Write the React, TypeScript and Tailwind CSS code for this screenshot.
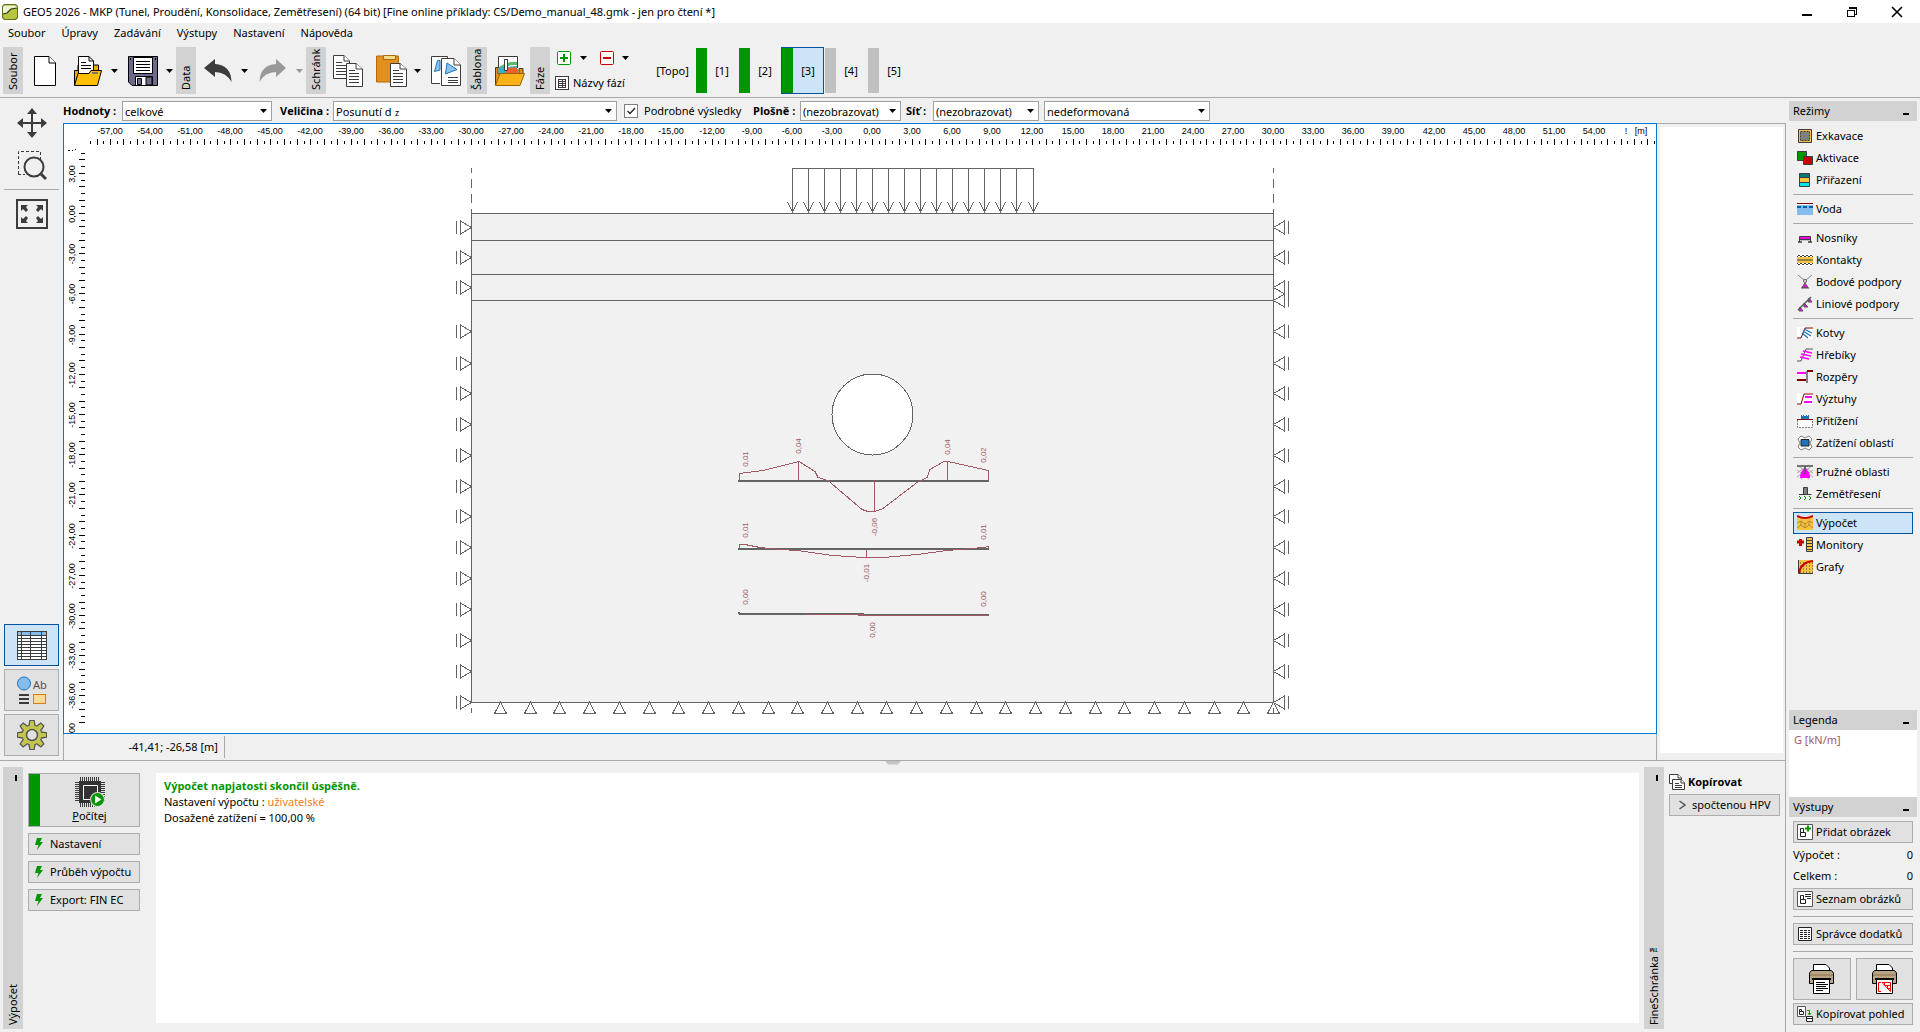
import type { ReactNode } from "react";
import { clsx } from "clsx";

export default function App() {
  return (
    <div className="flex h-screen flex-col overflow-hidden bg-[#f0f0f0] font-['Noto_Sans','Open_Sans',sans-serif] text-[11px] leading-4 text-black">
      <TitleBar />
      <MenuBar />
      <Toolbar />
      <div className="flex min-h-0 flex-1">
        <div className="flex min-w-0 flex-1 flex-col">
          <div className="flex min-h-0 flex-1">
            <ViewTools />
            <Workspace />
            <div className="flex w-[129px] shrink-0 flex-col pt-[25px]">
              <div className="flex flex-1 flex-col border-t border-r border-[#a9a9a9] pt-[3px] pr-[2px] pb-[7px] pl-[3px]">
                <div className="flex-1 bg-white" />
              </div>
            </div>
          </div>
          <BottomPanel />
        </div>
        <Sidebar />
      </div>
    </div>
  );
}

const TitleBar = () => {
  return (
    <header className="flex h-[23px] shrink-0 items-center bg-white pl-[2px]">
      <AppIcon />
      <h1 className="ml-[5px] flex-1 whitespace-nowrap">
        GEO5 2026 - MKP (Tunel, Proudění, Konsolidace, Zemětřesení) (64 bit)
        [Fine online příklady: CS/Demo_manual_48.gmk - jen pro čtení *]
      </h1>
      <button aria-label="Minimalizovat" className="flex w-[45px] justify-center">
        <svg width="12" height="12" stroke="#000" strokeWidth="2">
          <path d="M1 9H11" />
        </svg>
      </button>
      <button aria-label="Obnovit" className="flex w-[45px] justify-center">
        <svg width="12" height="12" fill="none" stroke="#000" shapeRendering="crispEdges">
          <path d="M3.5 3V1.5H10.5V8.5H9" strokeWidth="1" />
          <path d="M1.5 4H8.5V10.5H1.5Z" />
          <path d="M1 4H9M3 2H11" />
        </svg>
      </button>
      <button aria-label="Zavřít" className="flex w-[46px] justify-center">
        <svg width="12" height="12" stroke="#000" strokeWidth="1.6">
          <path d="M1 1L11 11M11 1L1 11" />
        </svg>
      </button>
    </header>
  );
};

const AppIcon = () => (
  <svg width="16" height="16" viewBox="0 0 16 16">
    <rect x="0.5" y="0.5" width="15" height="15" rx="3" fill="#9aae2c" stroke="#5f7020" />
    <path d="M1 1.500H15V4L9 5L5 9L1 10Z" fill="#eef2cc" />
    <path d="M1 10L5 9L9 5L15 4V13Q15 15 13 15H3Q1 15 1 13Z" fill="#b9c53e" />
    <path d="M1 10L5 9L9 5L15 4" fill="none" stroke="#2f3a10" strokeWidth="1.2" />
    <rect x="0.5" y="0.5" width="15" height="15" rx="3" fill="none" stroke="#5f7020" />
  </svg>
);

const MenuBar = () => {
  return (
    <nav className="flex h-5 shrink-0 items-center gap-4 pl-2">
      {["Soubor", "Úpravy", "Zadávání", "Výstupy", "Nastavení", "Nápověda"].map(
        (item) => (
          <button key={item}>{item}</button>
        )
      )}
    </nav>
  );
};

const Caret = ({ muted }: { muted?: boolean }) => (
  <svg width="7" height="4" className="shrink-0">
    <path d="M0 0H7L3.5 4Z" fill={muted ? "#999" : "#000"} />
  </svg>
);

const GroupTab = ({ children }: { children: string }) => (
  <div className="flex h-[47px] w-5 shrink-0 items-center justify-center bg-[#d2d2d2]">
    <span className="h-[47px] rotate-180 pt-1 leading-5 whitespace-nowrap [writing-mode:vertical-rl]">
      {children}
    </span>
  </div>
);

const ToolButton = ({
  label,
  className,
  children,
}: {
  label: string;
  className?: string;
  children: ReactNode;
}) => (
  <button
    aria-label={label}
    className={clsx("flex h-[47px] shrink-0 items-center justify-start", className)}
  >
    {children}
  </button>
);

const Toolbar = () => {
  return (
    <div className="flex h-[55px] shrink-0 border-b border-[#a9a9a9] pt-1 pl-[3px]">
      <GroupTab>Soubor</GroupTab>
      <ToolButton label="Nový" className="w-[40px] pl-[11px]">
        <svg width="22" height="30" fill="#fff" stroke="#000">
          <path d="M0.5 0.5H15L21.5 7V29.5H0.5Z" />
          <path d="M15 0.5V7H21.5" />
        </svg>
      </ToolButton>
      <ToolButton label="Otevřít" className="w-[65px] gap-[9px] pl-[11px]">
        <OpenIcon />
        <Caret />
      </ToolButton>
      <ToolButton label="Uložit" className="w-[48px] gap-2">
        <SaveIcon />
        <Caret />
      </ToolButton>
      <GroupTab>Data</GroupTab>
      <ToolButton label="Zpět" className="w-[63px] gap-[9px] pl-2">
        <svg width="28" height="23">
          <path d="M0 9L11 0V5Q27 6 27.500 23Q22 13 11 13V18Z" fill="#3c3c3c" />
        </svg>
        <Caret />
      </ToolButton>
      <ToolButton label="Znovu" className="w-[47px] gap-[10px]">
        <svg width="27" height="23">
          <path d="M27 9L17 0V5Q1 6 0.500 23Q6 13 17 13V18Z" fill="#999" />
        </svg>
        <Caret muted />
      </ToolButton>
      <GroupTab>Schránk</GroupTab>
      <ToolButton label="Kopírovat" className="w-[50px] pl-[7px]">
        <svg width="30" height="32" fill="#fff" stroke="#3c3c3c">
          <path d="M0.500 0.500H11L16.500 6V23.500H0.500Z" />
          <path d="M11 0.500V6H16.500M3 7.500H9M3 10.500H13M3 13.500H13M3 16.500H13M3 19.500H13" />
          <path d="M13.500 8.500H23L29.500 14V31.500H13.500Z" />
          <path d="M23 8.500V14H29.500M16 15.500H22M16 18.500H26M16 21.500H26M16 24.500H26M16 27.500H26" />
        </svg>
      </ToolButton>
      <ToolButton label="Vložit" className="w-[55px] gap-[7px]">
        <svg width="31" height="32" fill="#fff">
          <path d="M0.500 1H22.500V27H0.500Z" fill="#e3901f" stroke="#b06a10" />
          <path d="M7.500 0.500H19.500V4.500H7.500Z" fill="#f7d98a" stroke="#b06a10" />
          <g stroke="#3c3c3c">
            <path d="M14.500 8.500H24L30.500 14V31.500H14.500Z" />
            <path d="M24 8.500V14H30.500M17 15.500H23M17 18.500H27M17 21.500H27M17 24.500H27M17 27.500H27" />
          </g>
        </svg>
        <Caret />
      </ToolButton>
      <ToolButton label="Kopírovat obrázek" className="w-[36px]">
        <svg width="30" height="30" fill="#fff" stroke="#3c3c3c">
          <path d="M9 27.500H0.500V0.500H16.500V3" />
          <path d="M3.500 15.500L6.500 4.500H9V14Z" fill="#8cc4f0" stroke="#1d74bd" />
          <path d="M10.500 2.500H23L29.500 9V29.500H10.500Z" />
          <path d="M23 2.500V9H29.500" />
          <path d="M16 7L26 13.500L14.500 18Z" fill="#8cc4f0" stroke="#1d74bd" />
          <path d="M17 21.500H27M17 24.500H27M17 26.500H27" />
        </svg>
      </ToolButton>
      <GroupTab>Šablona</GroupTab>
      <ToolButton label="Šablona" className="w-[43px] pl-2">
        <svg width="30" height="30">
          <path d="M3.500 12V0.500H22.500V12" fill="#fff" stroke="#3c3c3c" />
          <path d="M4 11Q12 5 22 6V9Q12 8 4 15Z" fill="#59b96a" />
          <path d="M4 15Q12 10 22 10V14L4 20Z" fill="#29b5c9" />
          <path d="M8 20Q14 13 23 13V20Z" fill="#e8632b" />
          <path d="M9.500 3.500H12.500V14.500H9.500Z" fill="#fff" stroke="#3c3c3c" />
          <path d="M0.500 29V11.500H3V18H24V12.500H28V18" fill="#e3901f" stroke="#3c3c3c" />
          <path d="M4 11.500H22V17.500H4Z" fill="#e8632b" />
          <path d="M4 12L14 9L10 17.500H4Z" fill="#29b5c9" />
          <path d="M9.500 3.500H12.500V14.500H9.500Z" fill="#fff" stroke="#3c3c3c" />
          <path d="M0.500 29.500L5 17.500H29.500L25 29.500Z" fill="#fdb116" stroke="#9a6200" />
        </svg>
      </ToolButton>
      <GroupTab>Fáze</GroupTab>
      <div className="flex w-[100px] shrink-0 flex-col pt-1 pl-[5px]">
        <div className="flex h-[14px] items-center pl-[2px]">
          <button aria-label="Přidat fázi" className="flex items-center gap-[9px]">
            <svg width="14" height="14" fill="#fff" stroke="#009600">
              <rect x="0.500" y="0.500" width="13" height="13" rx="1" />
              <path d="M3 7H11M7 3V11" strokeWidth="2" />
            </svg>
            <Caret />
          </button>
          <button aria-label="Odebrat fázi" className="ml-[13px] flex items-center gap-2">
            <svg width="14" height="14" fill="#fff" stroke="#c80000">
              <rect x="0.500" y="0.500" width="13" height="13" rx="1" />
              <path d="M3 7H11" strokeWidth="2" />
            </svg>
            <Caret />
          </button>
        </div>
        <button className="mt-[10px] flex h-4 items-center gap-1 whitespace-nowrap">
          <svg width="14" height="14" fill="#fff" stroke="#3c3c3c" shapeRendering="crispEdges">
            <path d="M0.500 0.500H13.500V13.500H0.500Z" />
            <path d="M3 3.500H11M3 5.500H11M3 7.500H11M3 9.500H11M3 11.500H11M3.500 3V12M7.500 3V12M10.500 3V12" />
          </svg>
          Názvy fází
        </button>
      </div>
      <StageTabs />
    </div>
  );
};

const OpenIcon = () => (
  <svg width="28" height="30" stroke="#000">
    <path d="M0.500 29V14.500H4V9H24.500V16" fill="#f2a900" />
    <path d="M4.500 20V0.500H15L19.500 5V20Z" fill="#fff" />
    <path d="M15 0.500V5H19.500M7 6.500H12M7 9.500H17M7 12.500H17" fill="none" />
    <path d="M0.500 29.500L4 17.500H15L17 14.500H27.500L23.500 29.500Z" fill="#ffbf00" />
    <path d="M18 17H24" stroke="#777" strokeWidth="2" />
  </svg>
);

const SaveIcon = () => (
  <svg width="30" height="30" stroke="#000">
    <path d="M0.500 0.500H29.500V29.500H4L0.500 26Z" fill="#6d6a8c" />
    <path d="M5.500 1.500H24.500V17.500H5.500Z" fill="#fff" />
    <path d="M8 5.500H22M8 8.500H22M8 11.500H22M8 14.500H22" />
    <path d="M7.500 20.500H24.500V29.500H7.500Z" fill="#fff" />
    <path d="M9.500 22.500H13.500V28.500H9.500ZM18 21H24V29H18Z" fill="#6d6a8c" />
    <path d="M2 3H3M27 3H28" strokeWidth="2" />
  </svg>
);

const stages = [
  { name: "[1]", computed: true },
  { name: "[2]", computed: true },
  { name: "[3]", computed: true, selected: true },
  { name: "[4]", computed: false },
  { name: "[5]", computed: false },
];

const StageTabs = () => {
  return (
    <div className="flex h-[47px]">
      <button className="w-[45px] text-center">[Topo]</button>
      {stages.map(({ name, computed, selected }) => (
        <button
          key={name}
          className={clsx(
            "flex w-[43px] items-stretch border",
            selected ? "border-[#0054a0] bg-[#cce4f7]" : "border-transparent"
          )}
        >
          <span className={clsx("w-[11px]", computed ? "bg-[#009600]" : "bg-[#c0c0c0]")} />
          <span className="flex flex-1 items-center justify-center">{name}</span>
        </button>
      ))}
    </div>
  );
};

const ViewTools = () => {
  return (
    <div className="flex w-[63px] shrink-0 flex-col items-center pt-[9px] pb-1">
      <button aria-label="Posun">
        <svg width="30" height="32" fill="#3c3c3c">
          <path d="M15 1L20 7H16V15H24V11L30 16L24 21V17H16V25H20L15 31L10 25H14V17H6V21L0 16L6 11V15H14V7H10Z" />
        </svg>
      </button>
      <button aria-label="Zoom" className="mt-3">
        <svg width="30" height="30" fill="none" stroke="#3c3c3c">
          <path d="M1.500 23V0.500H23.500V8" strokeDasharray="3 2" />
          <path d="M1 23.500H8" strokeDasharray="3 2" />
          <circle cx="17" cy="16" r="9.500" strokeWidth="2" />
          <path d="M23 22L29 28" strokeWidth="3" />
        </svg>
      </button>
      <hr className="mx-1 mt-2 w-[55px] border-[#a9a9a9]" />
      <button aria-label="Celý výkres" className="mt-[9px]">
        <svg width="32" height="30" fill="#3c3c3c">
          <path d="M1 1H31V29H1Z" fill="none" stroke="#3c3c3c" strokeWidth="2" />
          <path d="M5 6H12L10 8L12 11L10 13L7 10L5 12ZM27 6H20L22 8L20 11L22 13L25 10L27 12ZM5 24H12L10 22L12 19L10 17L7 20L5 18ZM27 24H20L22 22L20 19L22 17L25 20L27 18Z" />
        </svg>
      </button>
      <div className="flex-1" />
      <div className="flex w-[55px] flex-col gap-[3px]">
        <button
          aria-label="Tabulky"
          className="flex h-[42px] items-center justify-center border border-[#0054a0] bg-[#cce4f7]"
        >
          <svg width="30" height="29" fill="#fff" stroke="#3c3c3c" shapeRendering="crispEdges">
            <path d="M0.500 0.500H29.500V28.500H0.500Z" />
            <path d="M1 1H29V4H1Z" fill="#84bdec" stroke="none" />
            <path d="M0 4.500H30M0 7.500H30M0 10.500H30M0 13.500H30M0 16.500H30M0 19.500H30M0 22.500H30M0 25.500H30M4.500 0V29M13.500 0V29M24.500 0V29" />
          </svg>
        </button>
        <button
          aria-label="Popisy"
          className="flex h-[42px] items-center justify-center border border-[#adadad] bg-[#e1e1e1]"
        >
          <svg width="30" height="28">
            <circle cx="7" cy="7.500" r="6.500" fill="#84bdec" stroke="#1d74bd" />
            <path d="M2 19H12M2 23H12M2 27H12" stroke="#3c3c3c" strokeWidth="2" />
            <rect x="16.500" y="18.500" width="12" height="9" fill="#fbdb93" stroke="#e07b1a" />
            <text x="16" y="13" fontSize="11" fill="#505050">
              Ab
            </text>
          </svg>
        </button>
        <button
          aria-label="Nastavení"
          className="flex h-[42px] items-center justify-center border border-[#adadad] bg-[#e1e1e1]"
        >
          <GearIcon />
        </button>
      </div>
    </div>
  );
};

const GearIcon = () => {
  const teeth = [0, 45, 90, 135, 180, 225, 270, 315];
  return (
    <svg width="30" height="30" fill="#c5c64f" stroke="#555">
      {teeth.map((a) => (
        <path
          key={a}
          d="M12 6L13 0.500H17L18 6Z"
          transform={`rotate(${a} 15 15)`}
          strokeWidth="1.500"
        />
      ))}
      <circle cx="15" cy="15" r="10" />
      {teeth.map((a) => (
        <path
          key={a}
          d="M12.500 7L13.500 1H16.500L17.500 7Z"
          transform={`rotate(${a} 15 15)`}
          stroke="none"
        />
      ))}
      <circle cx="15" cy="15" r="5.500" fill="#e1e1e1" strokeWidth="1.500" />
    </svg>
  );
};

const Dropdown = ({
  id,
  label,
  value,
  sub,
  className,
}: {
  id: string;
  label?: string;
  value: string;
  sub?: string;
  className: string;
}) => (
  <div className={clsx("relative h-5 shrink-0", className)}>
    <select
      id={id}
      aria-label={label}
      className="h-5 w-full appearance-none border border-[#a0a0a0] bg-white pl-[2px] text-[11px]"
    >
      <option>{value}</option>
    </select>
    {sub && (
      <span className="pointer-events-none absolute top-[6px] left-[62px] text-[9px] leading-3">
        {sub}
      </span>
    )}
    <span className="pointer-events-none absolute top-2 right-[5px] flex">
      <Caret />
    </span>
  </div>
);

const ResultBar = () => {
  return (
    <div className="flex h-[25px] shrink-0 items-start pt-[3px] leading-5 whitespace-nowrap">
      <label htmlFor="values" className="w-[59px] font-['Open_Sans'] font-bold">
        Hodnoty :
      </label>
      <Dropdown id="values" value="celkové" className="w-[150px]" />
      <label htmlFor="quantity" className="ml-2 w-[53px] font-['Open_Sans'] font-bold">
        Veličina :
      </label>
      <Dropdown id="quantity" value="Posunutí d" sub="z" className="w-[284px]" />
      <label className="ml-[7px] flex h-5 w-[122px] items-center gap-[6px]">
        <span className="relative flex">
          <input
            type="checkbox"
            defaultChecked
            className="peer h-[14px] w-[14px] appearance-none border border-[#808080] bg-white"
          />
          <svg
            width="14"
            height="14"
            className="pointer-events-none absolute inset-0 hidden peer-checked:block"
          >
            <path d="M3.500 7L6 9.500L11 4" fill="none" stroke="#222" strokeWidth="1.300" />
          </svg>
        </span>
        Podrobné výsledky
      </label>
      <label htmlFor="surface" className="w-[54px] pl-[7px] font-['Open_Sans'] font-bold">
        Plošně :
      </label>
      <Dropdown id="surface" value="(nezobrazovat)" className="w-[101px]" />
      <label htmlFor="mesh" className="w-8 pl-[5px] font-['Open_Sans'] font-bold">
        Síť :
      </label>
      <Dropdown id="mesh" value="(nezobrazovat)" className="w-[106px]" />
      <Dropdown id="shape" label="Tvar sítě" value="nedeformovaná" className="ml-[5px] w-[166px]" />
    </div>
  );
};

const Workspace = () => {
  return (
    <div className="flex min-w-0 flex-1 flex-col">
      <ResultBar />
      <div className="min-h-0 flex-1 overflow-hidden border border-[#0078d7] bg-white">
        <Drawing />
      </div>
      <div className="flex h-[26px] shrink-0 items-center border-x border-[#a9a9a9]">
        <div className="flex h-[22px] w-[161px] items-center justify-end border-r border-[#a9a9a9] pr-[6px]">
          -41,41; -26,58 [m]
        </div>
      </div>
    </div>
  );
};

// metres to canvas pixels
const X = (m: number) => Math.round(808 + m * 13.37);
const Y = (m: number) => Math.round(89 - m * 13.4);

const range = (from: number, count: number, step: number) =>
  Array.from({ length: count }, (_, i) => from + i * step);

const fmt = (n: number) => n.toFixed(2).replace(".", ",");

const Rulers = () => {
  return (
    <g fontFamily="'Liberation Sans', sans-serif" fontSize="9" textAnchor="middle">
      {range(-57, 38, 3).map((m) => (
        <text key={m} x={X(m)} y="10">
          {fmt(m)}
        </text>
      ))}
      <text x="1562" y="10">!</text>
      <text x="1577" y="10">[m]</text>
      {[3, ...range(0, 13, -3)].map((m) => (
        <text key={m} transform={`translate(11 ${Y(m) + 1}) rotate(-90)`}>
          {fmt(m)}
        </text>
      ))}
      <text transform="translate(11 604) rotate(-90)">00</text>
      <g stroke="#000" shapeRendering="crispEdges">
        <path d="M4 26.500H6M8 26.500H9M11 25.500H12" />
        {range(-58.5, 235, 0.5).map((m) => (
          <path key={m} d={m % 1 ? `M${X(m)}.5 17V20` : `M${X(m)}.5 15V21`} />
        ))}
        {range(4.5, 86, -0.5).map((m) => (
          <path key={m} d={m % 1 ? `M17 ${Y(m)}.5H21` : `M15 ${Y(m)}.5H21`} />
        ))}
      </g>
    </g>
  );
};

const sideSupports = [103, 133, 163, 207, 239, 269, 300, 331, 362, 392, 423, 454, 485, 516, 547, 578];

const SoilModel = () => {
  return (
    <g fill="none" stroke="#646464" shapeRendering="crispEdges">
      <path d="M407.500 89.500H1209.500V578.500H407.500Z" fill="#f1f1f1" />
      <path d="M407 116.500H1209M407 150.500H1209M407 176.500H1209" />
      <path d="M407.500 44V89M1209.500 44V89" strokeDasharray="9 6" strokeDashoffset="4" />
      <path d="M407.500 584V589M1209.500 584V589" />
      <path d="M728 44.500H970" />
      {[...range(728, 15, 16), 969].map((x) => (
        <path key={x} d={`M${x}.5 44V89M${x - 5}.5 78L${x}.5 88L${x + 5}.5 78`} />
      ))}
      {sideSupports.map((y) => (
        <path key={y} d={`M407.500 ${y}.5L396.500 ${y - 6}V${y + 7}ZM392.500 ${y - 6}V${y + 7}`} />
      ))}
      {[...sideSupports, 176].map((y) => (
        <path key={y} d={`M1209.500 ${y}.5L1220.500 ${y - 6}V${y + 7}ZM1224.500 ${y - 6}V${y + 7}`} />
      ))}
      {range(436, 27, 29.73).map(Math.round).map((x) => (
        <path key={x} d={`M${x}.5 578L${x - 6}.5 589.500H${x + 6}.5Z`} />
      ))}
      <circle cx="808.500" cy="290.500" r="40.500" fill="#fff" />
    </g>
  );
};

const anchorLabels = [
  { x: 681, y: 335, text: "0,01" },
  { x: 734, y: 322, text: "0,04" },
  { x: 883, y: 323, text: "0,04" },
  { x: 919, y: 331, text: "0,02" },
  { x: 810, y: 403, text: "-0,06" },
  { x: 681, y: 406, text: "0,01" },
  { x: 919, y: 408, text: "0,01" },
  { x: 802, y: 449, text: "-0,01" },
  { x: 681, y: 473, text: "0,00" },
  { x: 919, y: 475, text: "0,00" },
  { x: 808, y: 506, text: "0,00" },
];

const Displacements = () => {
  return (
    <>
      <g stroke="#646464" strokeWidth="2" shapeRendering="crispEdges">
        <path d="M674 357H925M674 425H925M674 489H676M675 490H800M794 491H925" />
      </g>
      <g fill="none" stroke="#a05a64" shapeRendering="crispEdges">
        <path d="M675.500 357V349.500L699 346.500L731 338.500L735 337.500L751 347.500L754 353.500L764 356.500L798 385.500L804 387.500H811L819 384.500L853 358.500L863 353.500L866 345.500L880 337.500H884L924.500 346.500V357" />
        <path d="M734.500 338V357M810.500 357V387M883.500 338V357" />
        <path d="M675.500 425V420.500H681L696 423.500L716 425.500L733 426.500L769 431.500L799 433.500H819L853 430.500L883 426.500L919 423.500L924.500 422.500V425" />
        <path d="M802.500 425V433M741 490.500H800M794 491.500H925" />
      </g>
      <g
        fontFamily="'Liberation Sans', sans-serif"
        fontSize="8"
        fill="#a05a64"
        textAnchor="middle"
      >
        {anchorLabels.map(({ x, y, text }) => (
          <text key={`${x}-${y}`} transform={`translate(${x + 3} ${y}) rotate(-90)`}>
            {text}
          </text>
        ))}
      </g>
    </>
  );
};

const Drawing = () => {
  return (
    <svg className="block h-full w-full">
      <Rulers />
      <SoilModel />
      <Displacements />
    </svg>
  );
};

const SideTab = ({ children }: { children: ReactNode }) => (
  <div className="flex w-5 shrink-0 flex-col items-center justify-between bg-[#d2d2d2] pt-2">
    <button aria-label="Sbalit panel" className="ml-[6px] h-[6px] w-[2px] bg-black" />
    <span className="rotate-180 pt-1 leading-5 whitespace-nowrap [writing-mode:vertical-rl]">
      {children}
    </span>
  </div>
);

const BottomPanel = () => {
  return (
    <div className="flex h-[272px] shrink-0 flex-col border-t border-r border-[#a9a9a9] pb-[3px]">
      <div className="flex h-[6px] items-start justify-center">
        <svg width="16" height="4">
          <path d="M0 0H16L13 3.500H3Z" fill="#c4c4c4" />
        </svg>
      </div>
      <div className="flex min-h-0 flex-1 pl-[3px]">
        <SideTab>Výpočet</SideTab>
        <div className="ml-[5px] flex w-[112px] shrink-0 flex-col gap-[6px] pt-[6px]">
          <button className="flex h-[54px] border border-[#adadad] bg-[#e1e1e1]">
            <span className="h-full w-[11px] bg-[#009600]" />
            <span className="flex flex-1 flex-col items-center pt-[3px]">
              <ChipIcon />
              <span className="mt-px">
                <u>P</u>očítej
              </span>
            </span>
          </button>
          {["Nastavení", "Průběh výpočtu", "Export: FIN EC"].map((label) => (
            <button
              key={label}
              className="flex h-[22px] items-center gap-[7px] border border-[#adadad] bg-[#e1e1e1] pl-[6px] whitespace-nowrap"
            >
              <svg width="8" height="12" fill="#009600">
                <path d="M2 0H7L5 4H8L2 12L3.500 7H0Z" />
              </svg>
              {label}
            </button>
          ))}
        </div>
        <div className="mt-[6px] mr-[5px] mb-[6px] ml-4 flex-1 bg-white pt-[5px] pl-2">
          <p className="font-['Open_Sans'] font-bold text-[#009600]">
            Výpočet napjatosti skončil úspěšně.
          </p>
          <p>
            Nastavení výpočtu : <span className="text-[#f07d1a]">uživatelské</span>
          </p>
          <p>Dosažené zatížení = 100,00 %</p>
        </div>
        <SideTab>FineSchránka™</SideTab>
        <div className="mr-[5px] ml-[5px] w-[111px] shrink-0 pt-[6px]">
          <div className="flex h-[18px] items-center gap-[3px] font-['Open_Sans'] font-bold">
            <svg width="16" height="16" fill="#fff" stroke="#3c3c3c">
              <path d="M0.500 0.500H9L12.500 4V9.500H0.500Z" />
              <path d="M9 0.500V4H12.500" />
              <path d="M3.500 5.500H12L15.500 9V15.500H3.500Z" />
              <path d="M12 5.500V9H15.500M6 9.500H10M6 11.500H13M6 13.500H13" />
            </svg>
            Kopírovat
          </div>
          <button className="mt-[3px] flex h-[22px] w-full items-center gap-[6px] border border-[#adadad] bg-[#e1e1e1] pl-[9px] whitespace-nowrap">
            <svg width="7" height="10" fill="none" stroke="#555" strokeWidth="1.500">
              <path d="M0.500 1L6 5L0.500 9" />
            </svg>
            spočtenou HPV
          </button>
        </div>
      </div>
    </div>
  );
};

const ChipIcon = () => (
  <svg width="30" height="30">
    <path
      d="M5.500 0V30M7.500 0V30M9.500 0V30M11.500 0V30M13.500 0V30M15.500 0V30M17.500 0V30M19.500 0V30M21.500 0V30M23.500 0V30"
      stroke="#3c3c3c"
      shapeRendering="crispEdges"
    />
    <path
      d="M0 5.500H30M0 7.500H30M0 9.500H30M0 11.500H30M0 13.500H30M0 15.500H30M0 17.500H30M0 19.500H30M0 21.500H30M0 23.500H30"
      stroke="#3c3c3c"
      shapeRendering="crispEdges"
    />
    <path d="M4 4H26V26H4Z" fill="#333" />
    <path d="M8.500 8.500H22.500V22.500H8.500Z" fill="none" stroke="#fff" />
    <circle cx="22.500" cy="22.500" r="7.500" fill="#e1e1e1" />
    <circle cx="22.500" cy="22.500" r="6.500" fill="#009600" />
    <path d="M20 18.500L26.500 22.500L20 26.500Z" fill="#fff" />
  </svg>
);

const modeGroups: { name: string; icon: ReactNode; selected?: boolean }[][] = [
  [
    {
      name: "Exkavace",
      icon: (
        <>
          <path d="M1.500 1.500H14.500V14.500H1.500Z" fill="#f5c542" stroke="#3c3c3c" />
          <path d="M3.500 3.500H12.500V12.500H3.500Z" fill="#808080" stroke="#3c3c3c" strokeDasharray="2 1" />
        </>
      ),
    },
    {
      name: "Aktivace",
      icon: (
        <>
          <path d="M0.500 1.500H9.500V10.500H0.500Z" fill="#009600" stroke="#3c3c3c" />
          <path d="M6.500 6.500H15.500V14.500H6.500Z" fill="#c80000" stroke="#3c3c3c" />
        </>
      ),
    },
    {
      name: "Přiřazení",
      icon: (
        <>
          <path d="M2.500 1.500H12.500V5.500H2.500Z" fill="#007878" stroke="#3c3c3c" />
          <path d="M2.500 5.500H12.500V10.500H2.500Z" fill="#f5c542" stroke="#3c3c3c" />
          <path d="M2.500 10.500H12.500V14.500H2.500Z" fill="#00e5ee" stroke="#3c3c3c" />
        </>
      ),
    },
  ],
  [
    {
      name: "Voda",
      icon: (
        <>
          <path d="M0 4H16V14H0Z" fill="#84bdec" />
          <path d="M0 3.500H16" stroke="#fff" />
          <path d="M0 2.500H16" stroke="#800000" />
          <path d="M0 6H16" stroke="#0060b0" strokeWidth="2" strokeDasharray="4 2" />
        </>
      ),
    },
  ],
  [
    {
      name: "Nosníky",
      icon: (
        <>
          <path d="M2.500 12V6.500H13.500V12" fill="none" stroke="#3c3c3c" />
          <path d="M3 7H13V9H3Z" fill="#f0f" />
          <path d="M3 9.500H13M1 12H5M11 12H15" stroke="#3c3c3c" strokeWidth="1.500" />
        </>
      ),
    },
    {
      name: "Kontakty",
      icon: (
        <>
          <path d="M0 2H16V14H0Z" fill="#fff" />
          <path d="M0 5H16V11H0Z" fill="#f5c542" />
          <path d="M0 8H16" stroke="#3c3c3c" />
          <path
            d="M0 5L2 3L4 5L6 3L8 5L10 3L12 5L14 3L16 5M0 11L2 13L4 11L6 13L8 11L10 13L12 11L14 13L16 11"
            fill="none"
            stroke="#3c3c3c"
          />
        </>
      ),
    },
    {
      name: "Bodové podpory",
      icon: (
        <>
          <path d="M8 9L5 13.500H11Z" fill="#f0f" stroke="#555" />
          <path d="M1 1L7 6M15 1L9 6" stroke="#808080" />
          <circle cx="8" cy="7" r="1.500" fill="#fff" stroke="#555" />
          <path d="M4 14H12" stroke="#555" />
        </>
      ),
    },
    {
      name: "Liniové podpory",
      icon: (
        <>
          <path d="M3 11L6 15H2ZM7 7L11 11H7ZM12 2L15 6H11Z" fill="#f0f" stroke="#555" />
          <path d="M1 14L14 1" stroke="#555" strokeWidth="1.500" />
        </>
      ),
    },
  ],
  [
    {
      name: "Kotvy",
      icon: (
        <>
          <path d="M0 2H16V14H0Z" fill="#fff" />
          <path d="M0 13H4L8 3H16" fill="none" stroke="#800000" />
          <path d="M7 4L15 8M6 6L14 11M5 8L11 13" stroke="#1d74bd" strokeWidth="1.300" />
        </>
      ),
    },
    {
      name: "Hřebíky",
      icon: (
        <>
          <path d="M0 14H4L9 2H16" fill="none" stroke="#555" />
          <path d="M6 4L15 6M4 7L14 9M3 10L12 12" stroke="#f0f" strokeWidth="1.500" />
        </>
      ),
    },
    {
      name: "Rozpěry",
      icon: (
        <>
          <path d="M0 4H9" stroke="#f0f" strokeWidth="2" />
          <path d="M1 3V5" stroke="#f0f" strokeWidth="2" />
          <path d="M9 2H11V14H9Z" fill="#808080" />
          <path d="M10 2H16M0 11H9" stroke="#800000" strokeWidth="2" />
        </>
      ),
    },
    {
      name: "Výztuhy",
      icon: (
        <>
          <path d="M0 2H16V14H0Z" fill="#fff" />
          <path d="M0 13H4L7 3H16" fill="none" stroke="#800000" />
          <path d="M8 6H15M7 11H15" stroke="#f0f" strokeWidth="2" />
        </>
      ),
    },
    {
      name: "Přitížení",
      icon: (
        <>
          <path d="M4 2H5V3H6V2H7V3H9V2H10V3H11V2H12V6H4Z" fill="#1d74bd" />
          <path d="M0.500 7V14.500H15.500V7" fill="#fff" stroke="#808080" strokeDasharray="2 1" />
          <path d="M0 6.500H16" stroke="#800000" />
        </>
      ),
    },
    {
      name: "Zatížení oblastí",
      icon: (
        <>
          <path d="M1 4L4 1L8 3L12 1L15 4L13 8L15 12L12 15L8 13L4 15L1 12L3 8Z" fill="#fff" stroke="#808080" />
          <path d="M4 4.500H12V11H4Z" fill="#1d74bd" stroke="#222" />
        </>
      ),
    },
  ],
  [
    {
      name: "Pružné oblasti",
      icon: (
        <>
          <path d="M0 1L16 13M0 6L12 15M4 1L16 9M16 1L0 13M16 6L4 15M12 1L0 9" stroke="#aaa" />
          <path d="M8 4Q13 7 13 14H3Q3 7 8 4Z" fill="#f0f" />
          <path d="M0 2H16M8 2V10" stroke="#555" strokeWidth="1.500" />
        </>
      ),
    },
    {
      name: "Zemětřesení",
      icon: (
        <>
          <path d="M6.500 1.500H10.500V8.500H6.500Z" fill="#808080" stroke="#3c3c3c" />
          <path d="M2 8.500H14.500" stroke="#3c3c3c" />
          <path d="M2 10L4 12L2 14M7 10L9 12L7 14M12 10L14 12L12 14" fill="none" stroke="#009600" />
        </>
      ),
    },
  ],
  [
    {
      name: "Výpočet",
      selected: true,
      icon: (
        <>
          <path d="M0 1H16V15H0Z" fill="#f5c542" />
          <path
            d="M0 8L4 6L8 9L12 6L16 8M0 13L4 10L8 13L12 10L16 13M4 6V10M12 6V10M8 9V13"
            fill="none"
            stroke="#b8862a"
          />
          <path d="M0 1Q8 5 16 1" fill="#fff" stroke="#c80000" strokeWidth="2" />
        </>
      ),
    },
    {
      name: "Monitory",
      icon: (
        <>
          <path d="M0 5H7M3.500 2V9" stroke="#c80000" strokeWidth="3" />
          <path d="M9.500 0.500H15.500V14.500H9.500Z" fill="#f5c542" stroke="#3c3c3c" />
          <path d="M10 3.500H15M10 6.500H15M10 9.500H15M10 12.500H15" stroke="#3c3c3c" />
        </>
      ),
    },
    {
      name: "Grafy",
      icon: (
        <>
          <path d="M1.500 1V14.500H16V1Z" fill="#f5c542" />
          <path d="M3 4H16M3 7H16M3 10H16M3 13H16" stroke="#3c3c3c" strokeDasharray="1 2" />
          <path d="M1.500 1V14.500H16" fill="none" stroke="#3c3c3c" />
          <path d="M2 14Q4 3 16 2" fill="none" stroke="#c80000" strokeWidth="2" />
        </>
      ),
    },
  ],
];

const PanelHeader = ({ children }: { children: string }) => (
  <div className="flex h-5 shrink-0 items-center justify-between bg-[#d2d2d2] pr-2 pl-1">
    <h2>{children}</h2>
    <button aria-label={`Sbalit ${children}`} className="mt-[6px] h-[2px] w-[6px] bg-black" />
  </div>
);

const SideButton = ({ icon, children }: { icon: ReactNode; children: string }) => (
  <button className="flex h-[22px] w-full items-center gap-[3px] border border-[#adadad] bg-[#e1e1e1] pl-[3px] whitespace-nowrap">
    <svg width="16" height="16" className="shrink-0">
      {icon}
    </svg>
    {children}
  </button>
);

const Sidebar = () => {
  return (
    <aside className="flex w-[134px] shrink-0 flex-col py-[3px] pr-[3px] pl-[3px]">
      <PanelHeader>Režimy</PanelHeader>
      <div className="flex flex-col px-1 pt-1">
        {modeGroups.map((group, i) => (
          <div key={i} className="flex flex-col">
            {i > 0 && <hr className="my-[3px] border-[#a9a9a9]" />}
            {group.map(({ name, icon, selected }) => (
              <button
                key={name}
                className={clsx(
                  "flex h-[22px] items-center gap-[3px] border pl-[3px] whitespace-nowrap",
                  selected ? "border-[#0054a0] bg-[#cce4f7]" : "border-transparent"
                )}
              >
                <svg width="16" height="16" className="shrink-0">
                  {icon}
                </svg>
                {name}
              </button>
            ))}
          </div>
        ))}
      </div>
      <div className="flex-1" />
      <PanelHeader>Legenda</PanelHeader>
      <div className="h-[67px] shrink-0 bg-white pt-[2px] pl-[5px] text-[#a05a64]">G [kN/m]</div>
      <PanelHeader>Výstupy</PanelHeader>
      <Outputs />
    </aside>
  );
};

const pictureGlyph = (
  <path d="M3.500 4.500H6.500V8.500H3.500ZM3.500 8.500H8.500V12.500H3.500Z" fill="none" stroke="#222" />
);

const Outputs = () => {
  return (
    <div className="flex shrink-0 flex-col px-1 pt-1 pb-1">
      <SideButton
        icon={
          <>
            <path d="M0.500 0.500H15.500V15.500H0.500Z" fill="#fff" stroke="#555" />
            {pictureGlyph}
            <path d="M8 4.500H14M11 1.500V7.500" stroke="#009600" strokeWidth="2" />
          </>
        }
      >
        Přidat obrázek
      </SideButton>
      <dl className="flex flex-col gap-[5px] pt-1 pb-1">
        <div className="flex justify-between">
          <dt>Výpočet :</dt>
          <dd>0</dd>
        </div>
        <div className="flex justify-between">
          <dt>Celkem :</dt>
          <dd>0</dd>
        </div>
      </dl>
      <SideButton
        icon={
          <>
            <path d="M0.500 0.500H15.500V15.500H0.500Z" fill="#fff" stroke="#555" />
            {pictureGlyph}
            <path d="M8 3.500H14M8 5.500H14M10 7.500H14" stroke="#222" />
          </>
        }
      >
        Seznam obrázků
      </SideButton>
      <hr className="my-[6px] border-[#a9a9a9]" />
      <SideButton
        icon={
          <>
            <path d="M1.500 1.500H14.500V14.500H1.500Z" fill="#fff" stroke="#222" />
            <path
              d="M3 4.500H13M3 6.500H13M3 8.500H13M3 10.500H13M3 12.500H13"
              stroke="#222"
              strokeDasharray="3 1"
            />
          </>
        }
      >
        Správce dodatků
      </SideButton>
      <hr className="my-[6px] border-[#a9a9a9]" />
      <div className="mb-[3px] flex gap-[5px]">
        <PrinterButton label="Tisk protokolu">
          <path d="M7 18.500H16M7 20.500H19M7 22.500H17M7 24.500H19M7 26.500H14" stroke="#000" />
        </PrinterButton>
        <PrinterButton label="Tisk pohledu">
          <path
            d="M9 18.500H6.500V27.500H9M10 18.500H18.500V27.500M10 18.500L18.500 27.500M12.500 18.500V21.500H18.500M15.500 21.500V24.500H18.500"
            fill="none"
            stroke="#f00"
          />
        </PrinterButton>
      </div>
      <SideButton
        icon={
          <>
            <path d="M0.500 0.500H8.500V10.500H0.500Z" fill="#fff" stroke="#555" />
            <path d="M2.500 3.500H4.500V5.500H2.500ZM2.500 5.500H6.500V8.500H2.500Z" fill="none" stroke="#222" />
            <path d="M10 4.500H12.500V8M11 7L12.500 9L14 7" fill="none" stroke="#009600" />
            <path d="M9.500 10.500H15.500V15.500H9.500ZM9.500 12.500H15.500" fill="#fff" stroke="#222" />
          </>
        }
      >
        Kopírovat pohled
      </SideButton>
    </div>
  );
};

const PrinterButton = ({ label, children }: { label: string; children: ReactNode }) => (
  <button
    aria-label={label}
    className="flex h-[42px] flex-1 items-center justify-center border border-[#adadad] bg-[#e1e1e1]"
  >
    <svg width="25" height="30" stroke="#000">
      <path d="M4.500 8V0.500H17L20.500 4V8Z" fill="#fff" />
      <path d="M2.500 6.500H22.500L24.500 9V19.500H0.500V9Z" fill="#b8a482" />
      <path d="M1 11H24" stroke="#8a7350" />
      <path d="M3 15H22" strokeWidth="2" />
      <path d="M4.500 15.500H20.500V29.500H4.500Z" fill="#fff" />
      {children}
    </svg>
  </button>
);
